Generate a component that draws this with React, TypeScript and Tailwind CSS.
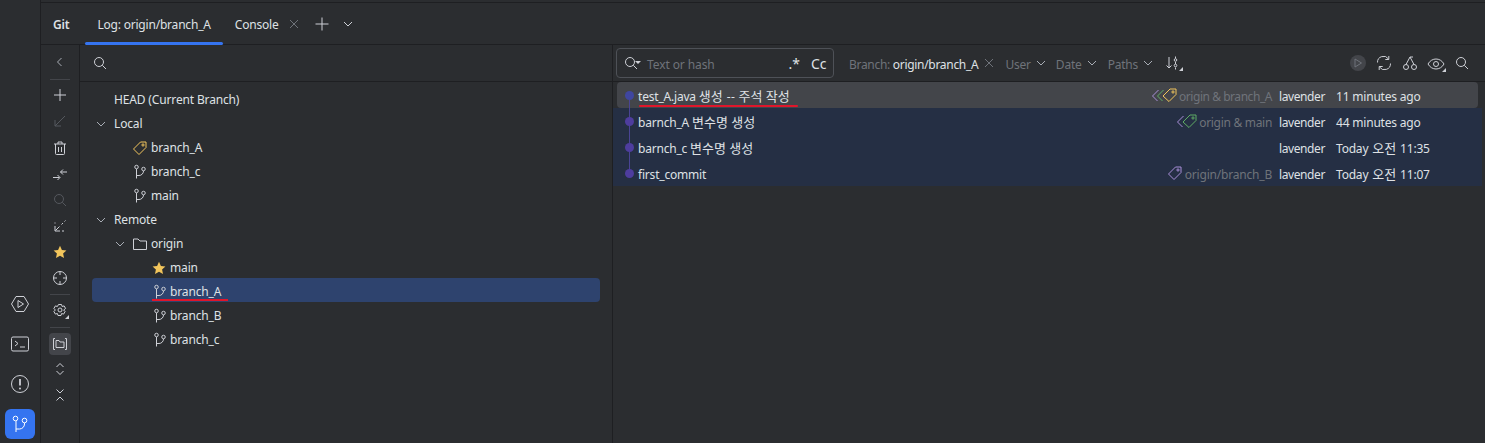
import React from "react";

const S = ({ size = 16, className = "", children, vb }: { size?: number; className?: string; children: React.ReactNode; vb?: string }) => (
  <svg width={size} height={size} viewBox={vb ?? "0 0 16 16"} fill="none" stroke="currentColor" strokeWidth="1" className={"shrink-0 " + className}>
    {children}
  </svg>
);

const BranchIcon = ({ className = "text-[#ced0d6]" }: { className?: string }) => (
  <S className={className}>
    <circle cx="4.500" cy="3" r="1.750" />
    <circle cx="11.500" cy="5" r="1.750" />
    <path d="M4.500 5v9.500M4.500 11.500h2.500a4.500 4.500 0 0 0 4.500-4.500" />
  </S>
);
const TagIcon = ({ className = "" }: { className?: string }) => (
  <S className={className}>
    <path d="M1.500 9 8.500 2H14v5.500l-7 7z" strokeLinejoin="round" />
    <circle cx="11" cy="5" r="1.100" />
  </S>
);
const MultiTag = ({ colors }: { colors: string[] }) => {
  const front = colors[colors.length - 1];
  const back = colors.slice(0, -1);
  const w = 15 + back.length * 5;
  return (
    <svg width={w} height="16" viewBox={`0 0 ${w} 16`} fill="none" strokeWidth="1" className="shrink-0">
      {back.map((c, i) => (
        <path key={c} d={`M${i * 5 + 6.5} 3 L${i * 5 + 0.5} 9 L${i * 5 + 5.5} 14`} stroke={c} strokeLinejoin="round" />
      ))}
      <g stroke={front} transform={`translate(${back.length * 5} 0)`}>
        <path d="M1 9 8 2H14v5.500l-7 7z" strokeLinejoin="round" />
        <circle cx="11" cy="5" r="1.100" />
      </g>
    </svg>
  );
};
const StarIcon = () => (
  <svg width="14" height="14" viewBox="0 0 14 14" className="shrink-0 text-[#f2c55c]" fill="currentColor">
    <path d="M7 .8l1.900 4.100 4.500.5-3.300 3 .9 4.500L7 10.700 3 12.900l.9-4.500-3.300-3 4.500-.5z" />
  </svg>
);
const Chevron = ({ className = "" }: { className?: string }) => (
  <S size={12} vb="0 0 12 12" className={className}>
    <path d="M2 4l4 4 4-4" />
  </S>
);
const Search = ({ className = "" }: { className?: string }) => (
  <S className={className}>
    <circle cx="7" cy="7" r="4.500" />
    <path d="M10.300 10.300 14 14" />
  </S>
);
const Caret = () => <div className="absolute right-0 bottom-0 w-0 h-0 border-l-[4px] border-l-transparent border-b-[4px] border-b-[#ced0d6]" />;
const K = ({ children }: { children: React.ReactNode }) => <span className="text-[13px] tracking-[0px]">{children}</span>;

const ToolBtn = ({ children, mt = "" }: { children: React.ReactNode; mt?: string }) => (
  <div className={"h-[26px] flex items-center justify-center relative " + mt}>{children}</div>
);

const Tree = ({ indent, chevron, chevronMr = "mr-[7px]", icon, label, selected, underline }: { indent: string; chevron?: boolean; chevronMr?: string; icon?: React.ReactNode; label: string; selected?: boolean; underline?: boolean }) => (
  <div className={"h-6 box-border pt-[4px] flex items-center rounded-[4px] mx-3 relative " + (selected ? "bg-[#2e436e] " : "") + indent}>
    {chevron && <Chevron className={"text-[#a8adb5] " + chevronMr} />}
    {icon}
    <span className="text-[12px] tracking-[-0.15px] text-[#dfe1e5] whitespace-nowrap">{label}</span>
    {underline && <div className="absolute left-[60px] top-[21px] w-[76px] h-[2px] bg-[#e0162b]" />}
  </div>
);

const Commit = ({ msg, tags, refs, refsTracking = "tracking-[-0.45px]", when, active, first, last, underline }: { msg: React.ReactNode; tags?: React.ReactNode; refs?: string; refsTracking?: string; when: React.ReactNode; active?: boolean; first?: boolean; last?: boolean; underline?: boolean }) => (
  <div className={"h-[26px] flex items-center relative text-[12px] tracking-[-0.2px] text-[#dfe1e5] " + (active ? "bg-[#43454a] rounded-[4px] mx-[4px]" : "bg-[#252f44]")}>
    <div className={"absolute w-px bg-[#4a4494] " + (first ? "left-[12px] top-[13px] bottom-0" : last ? "left-[16px] top-0 h-[13px]" : "left-[16px] top-0 bottom-0")} />
    <div className={"absolute w-[9px] h-[9px] rounded-full " + (active ? "left-[8px] bg-[#3f46a0]" : "left-[12px] bg-[#4e3d9e]")} />
    <span className={"whitespace-nowrap pt-[3px] " + (active ? "ml-[21px]" : "ml-[25px]")}>{msg}</span>
    {underline && <div className="absolute left-[22px] top-[23px] w-[159px] h-[2px] rounded-full bg-[#e0162b]" />}
    <div className={"ml-auto flex items-center gap-[2px] text-[#6f737a] whitespace-nowrap " + refsTracking}>
      {tags}
      <span className="pt-[3px]">{refs}</span>
    </div>
    <span className="w-[57px] ml-[7px] pt-[3px] whitespace-nowrap tracking-[-0.4px]">lavender</span>
    <span className={"whitespace-nowrap pt-[3px] " + (active ? "w-[142px]" : "w-[146px]")}>{when}</span>
  </div>
);

const Filter = ({ label, ml = "ml-[10px]" }: { label: string; ml?: string }) => (
  <div className={"flex items-center gap-[4px] text-[12px] tracking-[-0.2px] text-[#6f737a] " + ml}>
    <span className="pt-[3px]">{label}</span>
    <Chevron className="text-[#a8adb5]" />
  </div>
);

export default function App() {
  return (
    <div className="w-[1485px] h-[443px] bg-[#2b2d30] flex overflow-hidden" style={{ fontFamily: '"Noto Sans", "Noto Sans CJK KR", sans-serif' }}>
      {/* left stripe */}
      <div className="w-[41px] shrink-0 border-r border-[#1e1f22] flex flex-col items-center justify-end pb-[4px] gap-[10px] text-[#ced0d6]">
        <div className="w-[30px] h-[30px] flex items-center justify-center">
          <S size={20} vb="0 0 20 20"><path d="M6 2.500h8l4.500 7.500-4.500 7.500H6L1.500 10z" strokeLinejoin="round" /><path d="M8 6.500l5.500 3.500L8 13.500z" strokeLinejoin="round" /></S>
        </div>
        <div className="w-[30px] h-[30px] flex items-center justify-center">
          <S size={20} vb="0 0 20 20"><rect x="1.500" y="3" width="17" height="14" rx="1.500" /><path d="M5 7l3 2.500L5 12M10 13h5" /></S>
        </div>
        <div className="w-[30px] h-[30px] flex items-center justify-center">
          <S size={20} vb="0 0 20 20"><circle cx="10" cy="10" r="8.500" /><path d="M10 5v6.500" strokeWidth="1.800" /><circle cx="10" cy="14.500" r="1" fill="currentColor" stroke="none" /></S>
        </div>
        <div className="w-[30px] h-[30px] rounded-[6px] bg-[#3574f0] flex items-center justify-center text-white">
          <S size={20} vb="0 0 20 20"><circle cx="5.500" cy="4.500" r="2.300" /><circle cx="14.500" cy="6.500" r="2.300" /><path d="M6 7v11M6 15h3.500a5 5 0 0 0 5-5V9" /></S>
        </div>
      </div>

      <div className="flex-1 min-w-0 flex flex-col">
        <div className="h-[3px] border-b border-[#1e1f22] shrink-0" />
        {/* tab bar */}
        <div className="h-[42px] shrink-0 border-b border-[#1e1f22] flex items-stretch text-[12px] tracking-[-0.2px] text-[#dfe1e5]">
          <div className="flex items-center ml-[12px] pt-[3px] font-semibold">Git</div>
          <div className="relative flex items-center ml-[16px] px-[12px] pt-[3px]">
            <span>Log: origin/branch_A</span>
            <div className="absolute left-0 right-0 -bottom-px h-[3px] bg-[#3574f0] rounded-full" />
          </div>
          <div className="flex items-center ml-[12px] pt-[3px]">Console</div>
          <div className="flex items-center ml-[10px] text-[#6f737a]">
            <S size={12} vb="0 0 12 12"><path d="M2 2l8 8M10 2l-8 8" /></S>
          </div>
          <div className="flex items-center ml-[15px] text-[#ced0d6]">
            <S size={14} vb="0 0 14 14"><path d="M7 .5v13M.5 7h13" /></S>
          </div>
          <div className="flex items-center ml-[13px] text-[#ced0d6]">
            <Chevron />
          </div>
        </div>

        <div className="flex-1 min-h-0 flex">
          {/* toolbar column */}
          <div className="w-[39px] shrink-0 border-r border-[#1e1f22] flex flex-col items-center pt-[4px] text-[#ced0d6]">
            <ToolBtn><S size={12} vb="0 0 12 12" className="text-[#a8adb5]"><path d="M7.500 2 3.500 6l4 4" /></S></ToolBtn>
            <div className="w-5 h-px bg-[#43454a] mt-[4px] mb-[2px]" />
            <ToolBtn><S><path d="M8 2v12M2 8h12" /></S></ToolBtn>
            <ToolBtn><S className="text-[#55585e]"><path d="M13 3 3 13M3 7v6h6" /></S></ToolBtn>
            <ToolBtn mt="mt-[1px]"><S><path d="M2 4h12M6 4V2h4v2M3.500 4v9.500a1 1 0 0 0 1 1h7a1 1 0 0 0 1-1V4M6.500 7v5M9.500 7v5" /></S></ToolBtn>
            <ToolBtn><S><path d="M1 11.500h6.500M5.500 9l2.500 2.500L5.500 14M15 6H8.500M11 3.500 8.500 6 11 8.500" /></S></ToolBtn>
            <ToolBtn><Search className="text-[#55585e]" /></ToolBtn>
            <ToolBtn><S><path d="M7.500 8.500 3.500 12.500M3 8v5h5M9.500 6.500 11 5M12.500 3.500 13.500 2.500M10 13h2M3 5.500v-1" /></S></ToolBtn>
            <ToolBtn><StarIcon /></ToolBtn>
            <ToolBtn><S><circle cx="8" cy="8" r="6.500" /><path d="M8 1.500V5M8 11v3.500M1.500 8H5M11 8h3.500" /></S></ToolBtn>
            <div className="w-5 h-px bg-[#43454a] my-[3px]" />
            <ToolBtn>
              <div className="relative w-[18px] h-4 flex justify-center">
                <S><path d="M6.500 1.500h3l.6 2 2-.6 1.500 2.600L11.600 7l1.500 1.500-1.500 2.600-2-.6-.6 2h-3l-.6-2-2 .6L1.900 8.500 3.400 7 1.900 5.500l1.500-2.600 2 .6z" strokeLinejoin="round" /><circle cx="8" cy="7" r="2" /></S>
                <Caret />
              </div>
            </ToolBtn>
            <div className="w-5 h-px bg-[#43454a] my-[3px]" />
            <div className="w-[22px] h-[22px] rounded-[4px] bg-[#43454a] flex items-center justify-center mt-[2px]">
              <S><path d="M3 2.500H1.500v11H3M13 2.500h1.500v11H13" /><path d="M4 4.500h3l1 1.500h4v5.500H4z" strokeLinejoin="round" /></S>
            </div>
            <ToolBtn mt="mt-[1px]"><S><path d="M4.500 6 8 2.500 11.500 6M4.500 10 8 13.500l3.500-3.500" /></S></ToolBtn>
            <ToolBtn><S><path d="M4.500 2.500 8 6l3.500-3.500M4.500 13.500 8 10l3.500 3.500" /></S></ToolBtn>
          </div>

          {/* branch tree */}
          <div className="w-[533px] shrink-0 border-r border-[#1e1f22] flex flex-col">
            <div className="h-[37px] shrink-0 border-b border-[#1e1f22] flex items-center pl-[12px] text-[#ced0d6]">
              <Search />
            </div>
            <div className="pt-[4px]">
              <Tree indent="pl-[22px]" label="HEAD (Current Branch)" />
              <Tree indent="pl-[3px]" chevron label="Local" />
              <Tree indent="pl-[40px]" icon={<TagIcon className="text-[#f2c55c] mr-[3px]" />} label="branch_A" />
              <Tree indent="pl-[40px]" icon={<BranchIcon className="text-[#ced0d6] mr-[3px]" />} label="branch_c" />
              <Tree indent="pl-[40px]" icon={<BranchIcon className="text-[#ced0d6] mr-[3px]" />} label="main" />
              <Tree indent="pl-[3px]" chevron label="Remote" />
              <Tree indent="pl-[22px]" chevron chevronMr="mr-[6px]" icon={<S className="text-[#ced0d6] mr-[3px]"><path d="M1.500 3h4.500l2 2h6.500v8.500h-13z" strokeLinejoin="round" /></S>} label="origin" />
              <Tree indent="pl-[60px]" icon={<span className="mr-[4px] flex"><StarIcon /></span>} label="main" />
              <Tree indent="pl-[60px]" selected underline icon={<BranchIcon className="text-[#ced0d6] mr-[2px]" />} label="branch_A" />
              <Tree indent="pl-[60px]" icon={<BranchIcon className="text-[#ced0d6] mr-[2px]" />} label="branch_B" />
              <Tree indent="pl-[60px]" icon={<BranchIcon className="text-[#ced0d6] mr-[2px]" />} label="branch_c" />
            </div>
          </div>

          {/* log */}
          <div className="flex-1 min-w-0 flex flex-col">
            <div className="h-[36px] shrink-0 flex items-center pl-[3px] pr-[15px]">
              <div className="w-[218px] h-[30px] border border-[#4e5157] rounded-[4px] flex items-center pl-[6px] pr-[3px] text-[12px]">
                <div className="relative w-[18px] h-4 text-[#ced0d6]">
                  <Search />
                  <div className="absolute right-0 top-[6px] w-0 h-0 border-x-[3px] border-x-transparent border-t-[3px] border-t-[#ced0d6]" />
                </div>
                <span className="ml-[6px] pt-[3px] tracking-[-0.1px] text-[#6f737a]">Text or hash</span>
                <span className="ml-auto text-[14px] text-[#dfe1e5]">.*</span>
                <span className="ml-[11px] w-[19px] text-[14px] text-[#dfe1e5]">Cc</span>
              </div>
              <div className="ml-[15px] pt-[3px] text-[12px] tracking-[-0.3px] text-[#6f737a] whitespace-nowrap">
                Branch: <span className="text-[#dfe1e5]">origin/branch_A</span>
              </div>
              <S size={12} vb="0 0 12 12" className="ml-[5px] text-[#6f737a]"><path d="M2 2l8 8M10 2l-8 8" /></S>
              <Filter label="User" />
              <Filter label="Date" ml="ml-[9px]" />
              <Filter label="Paths" />
              <div className="relative w-[18px] h-4 ml-[11px] text-[#ced0d6]">
                <S><path d="M4 2v11M1.500 10.500 4 13l2.500-2.500" /><path d="M10.500 1.500v2M10.500 7v2M10.500 12.500v2" /><circle cx="10.500" cy="5" r="1.300" /><circle cx="10.500" cy="10.500" r="1.300" /></S>
                <Caret />
              </div>
              <div className="ml-auto flex items-center text-[#ced0d6] gap-[10px]">
                <div className="w-4 h-4 rounded-full bg-[#43454a] flex items-center justify-center text-[#6f737a]">
                  <S size={10} vb="0 0 10 10"><path d="M2 1l6.500 4L2 9z" strokeLinejoin="round" /></S>
                </div>
                <S><path d="M1.500 7.500A6 6 0 0 1 12.500 4M14.500 8.500A6 6 0 0 1 3.500 12M12.800 1v3.500H9.300M3.200 15v-3.500h3.500" /></S>
                <S><circle cx="4" cy="12" r="2.500" /><circle cx="12" cy="12" r="2.500" /><path d="M4 9.500 8 2l4 7.500M8 2h3" /></S>
                <div className="relative w-4 h-4">
                  <S size={18} vb="0 0 18 16" className="absolute left-[-1px]"><path d="M1 8c2-3.500 5-5 8-5s6 1.500 8 5c-2 3.500-5 5-8 5S3 11.500 1 8z" /><circle cx="9" cy="8" r="2.500" /></S>
                  <div className="absolute right-[-2px] bottom-[-1px] w-0 h-0 border-l-[4px] border-l-transparent border-b-[4px] border-b-[#ced0d6]" />
                </div>
                <Search />
              </div>
            </div>
            <div className="border-t border-[#1e1f22] pr-[3px]">
              <Commit first active underline msg={<>test_A.java <K>생성</K> <span className="tracking-[0.6px] ml-[1px] [font-variant-ligatures:none]">--</span> <K>주석 작성</K></>} refs="origin & branch_A" when="11 minutes ago" tags={<MultiTag colors={["#a98fd8", "#5fad65", "#f2c55c"]} />} />
              <Commit msg={<>barnch_A <K>변수명 생성</K></>} refs="origin & main" refsTracking="tracking-[-0.3px]" when="44 minutes ago" tags={<MultiTag colors={["#a98fd8", "#5fad65"]} />} />
              <Commit msg={<>barnch_c <K>변수명 생성</K></>} when={<>Today <span className="mx-[1px]"><K>오전</K></span> 11:35</>} />
              <Commit last msg="first_commit" refs="origin/branch_B" refsTracking="tracking-[-0.2px]" when={<>Today <span className="mx-[1px]"><K>오전</K></span> 11:07</>} tags={<TagIcon className="text-[#a98fd8]" />} />
            </div>
          </div>
        </div>
      </div>
    </div>
  );
}
